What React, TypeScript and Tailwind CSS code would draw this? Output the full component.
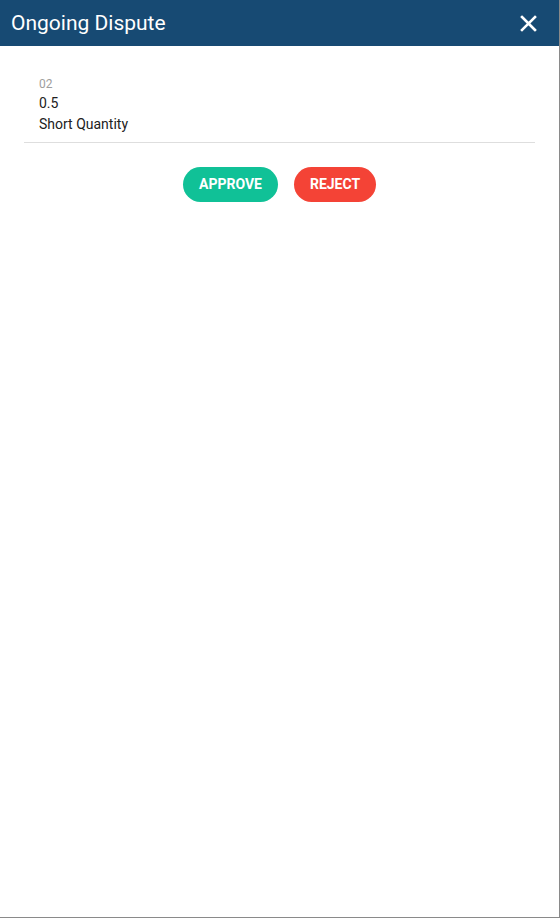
import React from 'react';

export default function App() {
  return (
    <div className="w-[560px] h-[918px] bg-white" style={{ fontFamily: 'Roboto, "Noto Sans", sans-serif' }}>
      <div className="h-full w-full flex flex-col border-r border-b border-[#8a8a8a]">
        {/* Header */}
        <div className="h-[46px] shrink-0 bg-[#174a73] flex items-center justify-between pl-[11px] pr-[21px]">
          <span className="text-white text-[21px] leading-none">Ongoing Dispute</span>
          <button className="w-5 h-5 flex items-center justify-center text-white">
            <svg width="17" height="17" viewBox="0 0 17 17" fill="none" stroke="currentColor" strokeWidth="2.6" strokeLinecap="square">
              <path d="M2 2L15 15M15 2L2 15" />
            </svg>
          </button>
        </div>

        {/* Body */}
        <div className="px-6 pt-[29px]">
          <div className="px-[15px] pb-[7px] border-b border-[#dedede]">
            <div className="text-[12px] leading-[18px] text-[#9e9e9e]">02</div>
            <div className="text-[14px] leading-[21px] text-[#212121]">0.5</div>
            <div className="text-[14px] leading-[21px] text-[#212121]">Short Quantity</div>
          </div>
          <div className="flex justify-center gap-4 pt-6">
            <button className="h-[35px] w-[95px] rounded-full bg-[#10c197] text-white text-[14px] font-bold">
              APPROVE
            </button>
            <button className="h-[35px] w-[82px] rounded-full bg-[#f44336] text-white text-[14px] font-bold">
              REJECT
            </button>
          </div>
        </div>
      </div>
    </div>
  );
}
